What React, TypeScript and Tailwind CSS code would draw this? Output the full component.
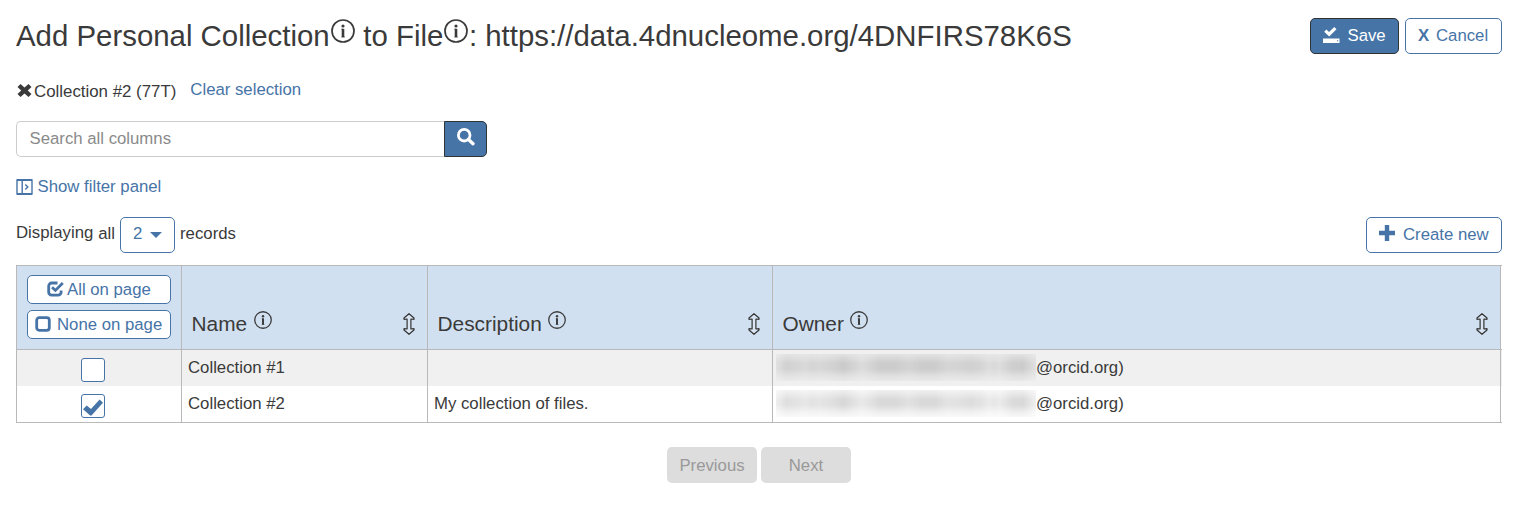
import React from "react";

function InfoIcon({ className }: { className: string }) {
  return (
    <svg viewBox="0 0 24 24" className={className} fill="none">
      <circle cx="12" cy="12" r="11" stroke="currentColor" strokeWidth="1.7" />
      <circle cx="12" cy="7" r="1.6" fill="currentColor" />
      <path d="M12 9.8v8.4" stroke="currentColor" strokeWidth="2.6" />
      <path d="M10.2 10.2H12M10.2 18h3.8" stroke="currentColor" strokeWidth="0.6" />
    </svg>
  );
}

function SortIcon() {
  return (
    <svg viewBox="0 0 12 22" className="mb-px h-[22px] w-3" fill="#d9e5f2" stroke="#333" strokeWidth="1.2" strokeLinejoin="round">
      <path d="M6 .7 11 5v1.3L7.9 6v10l3.1-.3V17L6 21.3 1 17v-1.3l3.1.3V6L1 6.3V5z" />
    </svg>
  );
}

function CheckMark({ className }: { className: string }) {
  return (
    <svg viewBox="0 0 20 17" className={className} fill="currentColor">
      <path d="M0 10.2 3.7 6.5 8 10 16.6.5 20 3.8 8.5 16.5 7.2 16.5z" />
    </svg>
  );
}

const columns = ["Name", "Description", "Owner"];

const rows = [
  { name: "Collection #1", description: "", checked: false },
  { name: "Collection #2", description: "My collection of files.", checked: true },
];

const grid = "grid grid-cols-[165px_246px_345px_728px]";
const outlineButton =
  "flex items-center rounded-[5px] border border-[#4674a7] bg-white text-[#4674a7]";

export default function App() {
  return (
    <div className="h-[509px] w-[1516px] overflow-hidden bg-white pt-[18px] pr-[14px] pl-4 font-['Liberation_Sans',Arial,sans-serif] text-[16.75px] leading-5 text-[#3a3a3a]">
      <header className="flex h-9 justify-between">
        <h1 className="flex h-9 items-center text-[29.4px] leading-9 whitespace-pre">
          <span>Add Personal Collection</span>
          <InfoIcon className="mb-[11px] ml-px h-6 w-6" />
          <span className="ml-[0.5px]"> to File</span>
          <InfoIcon className="mb-[11px] ml-px h-6 w-6" />
          <span className="ml-[0.5px]">: https://data.4dnucleome.org/4DNFIRS78K6S</span>
        </h1>
        <div className="flex gap-1.5">
          <button className="flex h-9 w-[89px] items-center rounded-[5px] border border-[#2f3336] bg-[#4674a7] pb-px pl-3 text-white">
            <svg viewBox="0 0 17 16" className="mb-px h-4 w-[17px]" fill="currentColor">
              <path d="M1.2 4.8 3.5 2.6 6 5 11.3 0 13.5 2.2 6.2 9.6z" />
              <path fillRule="evenodd" d="M0 11.5h16.5V16H0zM14 13.3v1h1.2v-1z" />
            </svg>
            <span className="ml-[7.5px]">Save</span>
          </button>
          <button className={`${outlineButton} h-9 w-[97px] pl-3`}>
            <span className="w-[18px] text-left font-bold">X</span>
            <span>Cancel</span>
          </button>
        </div>
      </header>

      <div className="mt-[27px] flex h-5 items-start">
        <svg viewBox="0 0 14 13" className="mt-[3px] ml-[1px] h-[13px] w-[15px]" fill="currentColor">
          <path d="M0 3 3 0 7 3.6 11 0 14 3 10.3 6.5 14 10 11 13 7 9.4 3 13 0 10 3.7 6.5z" />
        </svg>
        <span className="mt-px ml-[2px] text-[16.85px]">Collection #2 (77T)</span>
        <a className="-mt-px ml-[14px] text-[#4674a7]">Clear selection</a>
      </div>

      <div className="mt-5 flex h-9">
        <div className="flex w-[428px] items-center rounded-l-[5px] border border-r-0 border-[#ccc] pb-px pl-[12.5px] text-[#8a8a8a]">
          Search all columns
        </div>
        <button className="flex w-[43px] justify-center rounded-r-[5px] border border-[#2f3336] bg-[#4674a7] pt-[6px] text-white">
          <svg viewBox="0 0 18 18" className="h-[18px] w-[18px]" fill="none" stroke="currentColor">
            <circle cx="7.2" cy="7.2" r="5.8" strokeWidth="2.8" />
            <path d="m11.5 11.5 4.5 4.2" strokeWidth="3.4" strokeLinecap="round" />
          </svg>
        </button>
      </div>

      <div className="mt-5 flex h-5 items-center text-[#4674a7]">
        <svg viewBox="0 0 17 16" className="h-4 w-[17px]" fill="none" stroke="currentColor">
          <path d="M1 1h15v14H1zM6.2 1v14" strokeWidth="1.4" />
          <path d="M1 15h15M1 1h15" strokeWidth="1.8" />
          <path d="m9.3 5.5 2.5 2.5-2.5 2.5" strokeWidth="1.4" />
        </svg>
        <span className="ml-[4.5px]">Show filter panel</span>
      </div>

      <div className="mt-5 flex h-9 items-center justify-between">
        <div className="flex items-center">
          <span className="mb-[5px]">Displaying</span>
          <span className="mb-[3px] ml-[5px]">all</span>
          <button className={`${outlineButton} ml-[5px] h-9 w-[55px] pb-[3px] pl-3`}>
            <span>2</span>
            <svg viewBox="0 0 12 6" className="mt-[3px] ml-2 h-1.5 w-3" fill="currentColor">
              <path d="M0 0h12L6 6z" />
            </svg>
          </button>
          <span className="mb-[3px] ml-[5px]">records</span>
        </div>
        <button className={`${outlineButton} h-9 w-[136px] pb-px pl-[11.5px]`}>
          <svg viewBox="0 0 16 16" className="mb-[3px] h-4 w-4" fill="currentColor">
            <path d="M5.8 0h4.4v5.8H16v4.4h-5.8V16H5.8v-5.8H0V5.8h5.8z" />
          </svg>
          <span className="ml-[8.5px]">Create new</span>
        </button>
      </div>

      <div className="mt-3 border-y border-l border-[#b9b9b9]">
        <div className={`${grid} h-[84px] border-b border-[#b9b9b9]`}>
          <div className="flex flex-col gap-1.5 border-r border-[#b9b9b9] bg-[#d1e0f0] py-[9px] pl-2.5">
            <button className={`${outlineButton} h-[29px] w-36 pl-[18.5px]`}>
              <svg viewBox="0 0 17 16" className="mb-[2px] h-4 w-[17px]" fill="none" stroke="currentColor">
                <path d="M10.5 2H4.7A3 3 0 0 0 1.7 5v6.2a3 3 0 0 0 3 3h6.4a3 3 0 0 0 3-3V9.5" strokeWidth="2.8" />
                <path d="M5 6.3 8.4 9.4 15.8 2" strokeWidth="2.8" />
              </svg>
              <span className="ml-[3.5px]">All on page</span>
            </button>
            <button className={`${outlineButton} h-[29px] w-36 pt-px pl-[7px]`}>
              <svg viewBox="0 0 16 16" className="mb-[2px] h-4 w-4" fill="none" stroke="currentColor">
                <rect x="1.7" y="1.7" width="12.6" height="12.6" rx="2.5" strokeWidth="2.8" />
              </svg>
              <span className="ml-1.5">None on page</span>
            </button>
          </div>
          {columns.map((name) => (
            <div key={name} className="flex items-end justify-between border-r border-[#b9b9b9] bg-[#d1e0f0] pr-3 pb-[13px] pl-[9.5px]">
              <div className="flex h-6 items-center text-[20.85px] leading-6">
                <span>{name}</span>
                <InfoIcon className="mb-[9px] ml-[6.5px] h-[18px] w-[18px]" />
              </div>
              <SortIcon />
            </div>
          ))}
        </div>
        {rows.map((row) => (
          <div key={row.name} className={`${grid} h-9 ${row.checked ? "bg-white" : "bg-[#f0f0f0]"}`}>
            <div className="border-r border-[#b9b9b9] pt-2 pl-16">
              <span className="flex h-6 w-6 items-center justify-center rounded-[3px] border border-[#4674a7] bg-white text-[#4674a7]">
                {row.checked && <CheckMark className="mt-[3px] h-[17px] w-5" />}
              </span>
            </div>
            <div className="border-r border-[#b9b9b9] pt-2 pl-1.5">{row.name}</div>
            <div className="border-r border-[#b9b9b9] pt-2 pl-1.5">{row.description}</div>
            <div className="flex border-r border-[#b9b9b9] pt-2 pl-[3px]">
              <span className="-mt-1 h-[27px] w-[260px] bg-[linear-gradient(90deg,#00000010_0,#00000020_4%,#0000001c_8%,#00000018_11%,#0000001c_14%,#0000001a_17%,#00000020_22%,#00000028_26%,#00000020_29%,#00000016_33%,#0000001c_36%,#00000026_40%,#00000026_46%,#0000001e_51%,#00000026_56%,#00000026_61%,#0000001c_66%,#0000001e_71%,#00000022_75%,#0000001c_79%,#00000014_82%,#00000018_84%,#00000014_86%,#00000024_91%,#00000026_95%,#00000010_100%)] [mask-image:linear-gradient(#0006,#000_35%,#000_55%,#0006_85%,#0003)]" />
              <span>@orcid.org)</span>
            </div>
          </div>
        ))}
      </div>

      <div className="mt-6 flex h-9 justify-center gap-1 pr-px text-[#999]">
        <button className="w-[90px] rounded-[5px] bg-[#ddd] pt-px pl-px">Previous</button>
        <button className="w-[90px] rounded-[5px] bg-[#ddd] pt-px pl-px">Next</button>
      </div>
    </div>
  );
}
